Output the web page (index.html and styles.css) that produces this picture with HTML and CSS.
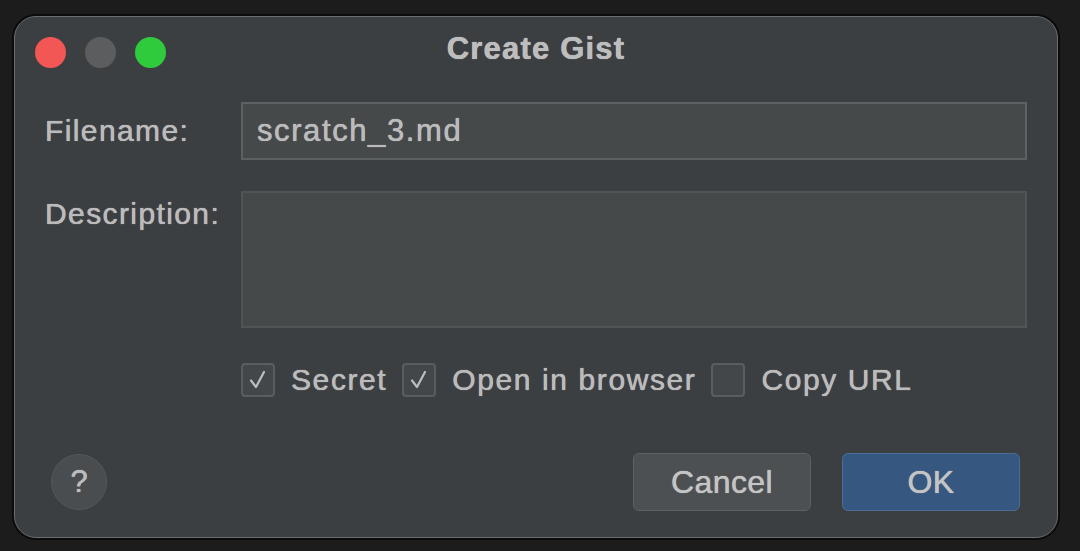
FILE: index.html
```html
<!DOCTYPE html>
<html>
<head>
<meta charset="utf-8">
<link rel="stylesheet" href="styles.css">
</head>
<body>
<div class="dialog">
  <div class="titlebar">
    <div class="lights">
      <span class="light red"></span>
      <span class="light gray"></span>
      <span class="light green"></span>
    </div>
    <div class="title">Create Gist</div>
  </div>
  <div class="form">
    <div class="row">
      <label class="label">Filename:</label>
      <div class="input">scratch_3.md</div>
    </div>
    <div class="row top">
      <label class="label desc">Description:</label>
      <div class="textarea"></div>
    </div>
    <div class="checks">
      <span class="cb on"><svg viewBox="0 0 34 34"><path d="M10 17.5 L15 24 L23 9" fill="none" stroke="#bdbdbd" stroke-width="2.2" stroke-linecap="round" stroke-linejoin="round"/></svg></span>
      <span class="cbl">Secret</span>
      <span class="cb on"><svg viewBox="0 0 34 34"><path d="M10 17.5 L15 24 L23 9" fill="none" stroke="#bdbdbd" stroke-width="2.2" stroke-linecap="round" stroke-linejoin="round"/></svg></span>
      <span class="cbl">Open in browser</span>
      <span class="cb"></span>
      <span class="cbl">Copy URL</span>
    </div>
  </div>
  <div class="footer">
    <div class="help">?</div>
    <div class="buttons">
      <div class="btn cancel">Cancel</div>
      <div class="btn ok">OK</div>
    </div>
  </div>
</div>
</body>
</html>
```

FILE: styles.css
```css
html, body {
  margin: 0;
  padding: 0;
  background: #1c1c1c;
  width: 1080px;
  height: 551px;
  overflow: hidden;
  font-family: "Liberation Sans", Arial, sans-serif;
}
body {
  padding: 16px 0 0 14px;
  box-sizing: border-box;
}
.dialog {
  width: 1044px;
  height: 522px;
  box-sizing: border-box;
  background: #3c3f41;
  border-radius: 22px;
  border: 1px solid #6a6d70;
  box-shadow: 0 0 0 2px #0c0c0c;
  position: relative;
  color: #bbbbbb;
  text-shadow: 0 0 1px rgba(195, 195, 195, 0.9), 0 0 0.5px rgba(195, 195, 195, 0.9);
}
.titlebar {
  height: 70px;
  display: flex;
  align-items: center;
  position: relative;
}
.lights {
  display: flex;
  gap: 19px;
  padding-left: 20px;
}
.light {
  width: 31px;
  height: 31px;
  border-radius: 50%;
  display: block;
}
.red { background: #f25655; }
.gray { background: #5c5d5f; }
.green { background: #2fcb3d; }
.title {
  position: absolute;
  left: 0;
  right: 0;
  top: 14px;
  text-align: center;
  font-weight: bold;
  font-size: 31px;
  letter-spacing: 1.2px;
  color: #bdbdbd;
}
.form {
  padding: 15px 30px 0 30px;
}
.row {
  display: flex;
  align-items: center;
}
.row.top {
  align-items: flex-start;
  margin-top: 31px;
}
.label {
  width: 196px;
  font-size: 30px;
  letter-spacing: 1.4px;
  color: #bbbbbb;
}
.label.desc {
  margin-top: 6px;
}
.input {
  flex: 1;
  height: 58px;
  box-sizing: border-box;
  background: #45494a;
  border: 2px solid #5e6163;
  font-size: 31px;
  letter-spacing: 1.6px;
  color: #bbbbbb;
  padding-left: 14px;
  display: flex;
  align-items: center;
}
.textarea {
  flex: 1;
  height: 137px;
  box-sizing: border-box;
  background: #45494a;
  border: 2px solid #515456;
}
.checks {
  display: flex;
  align-items: center;
  margin-top: 34px;
  padding-left: 196px;
  height: 36px;
}
.cb {
  width: 34px;
  height: 34px;
  box-sizing: border-box;
  border: 2px solid #5a5d60;
  background: #43474a;
  border-radius: 4px;
  display: flex;
  align-items: center;
  justify-content: center;
  margin-right: 16px;
}
.cb svg {
  width: 34px;
  height: 34px;
  flex: none;
}
.cbl {
  font-size: 30px;
  letter-spacing: 1.6px;
  color: #bbbbbb;
  margin-right: 15px;
}
.footer {
  position: absolute;
  left: 36px;
  right: 36px;
  bottom: 26px;
  display: flex;
  align-items: center;
  justify-content: space-between;
}
.help {
  width: 56px;
  height: 56px;
  border-radius: 50%;
  background: #4a4d50;
  border: 1px solid #55585b;
  box-sizing: border-box;
  display: flex;
  align-items: center;
  justify-content: center;
  font-size: 31px;
  color: #bdbdbd;
}
.buttons {
  display: flex;
  gap: 31px;
  margin-right: 1px;
}
.btn {
  width: 178px;
  height: 58px;
  box-sizing: border-box;
  border-radius: 6px;
  display: flex;
  align-items: center;
  justify-content: center;
  font-size: 32px;
  letter-spacing: 0.4px;
  color: #c4c4c4;
}
.cancel {
  background: #4c5052;
  border: 1px solid #5e6163;
}
.ok {
  background: #365880;
  border: 1px solid #4a6d98;
}
```
